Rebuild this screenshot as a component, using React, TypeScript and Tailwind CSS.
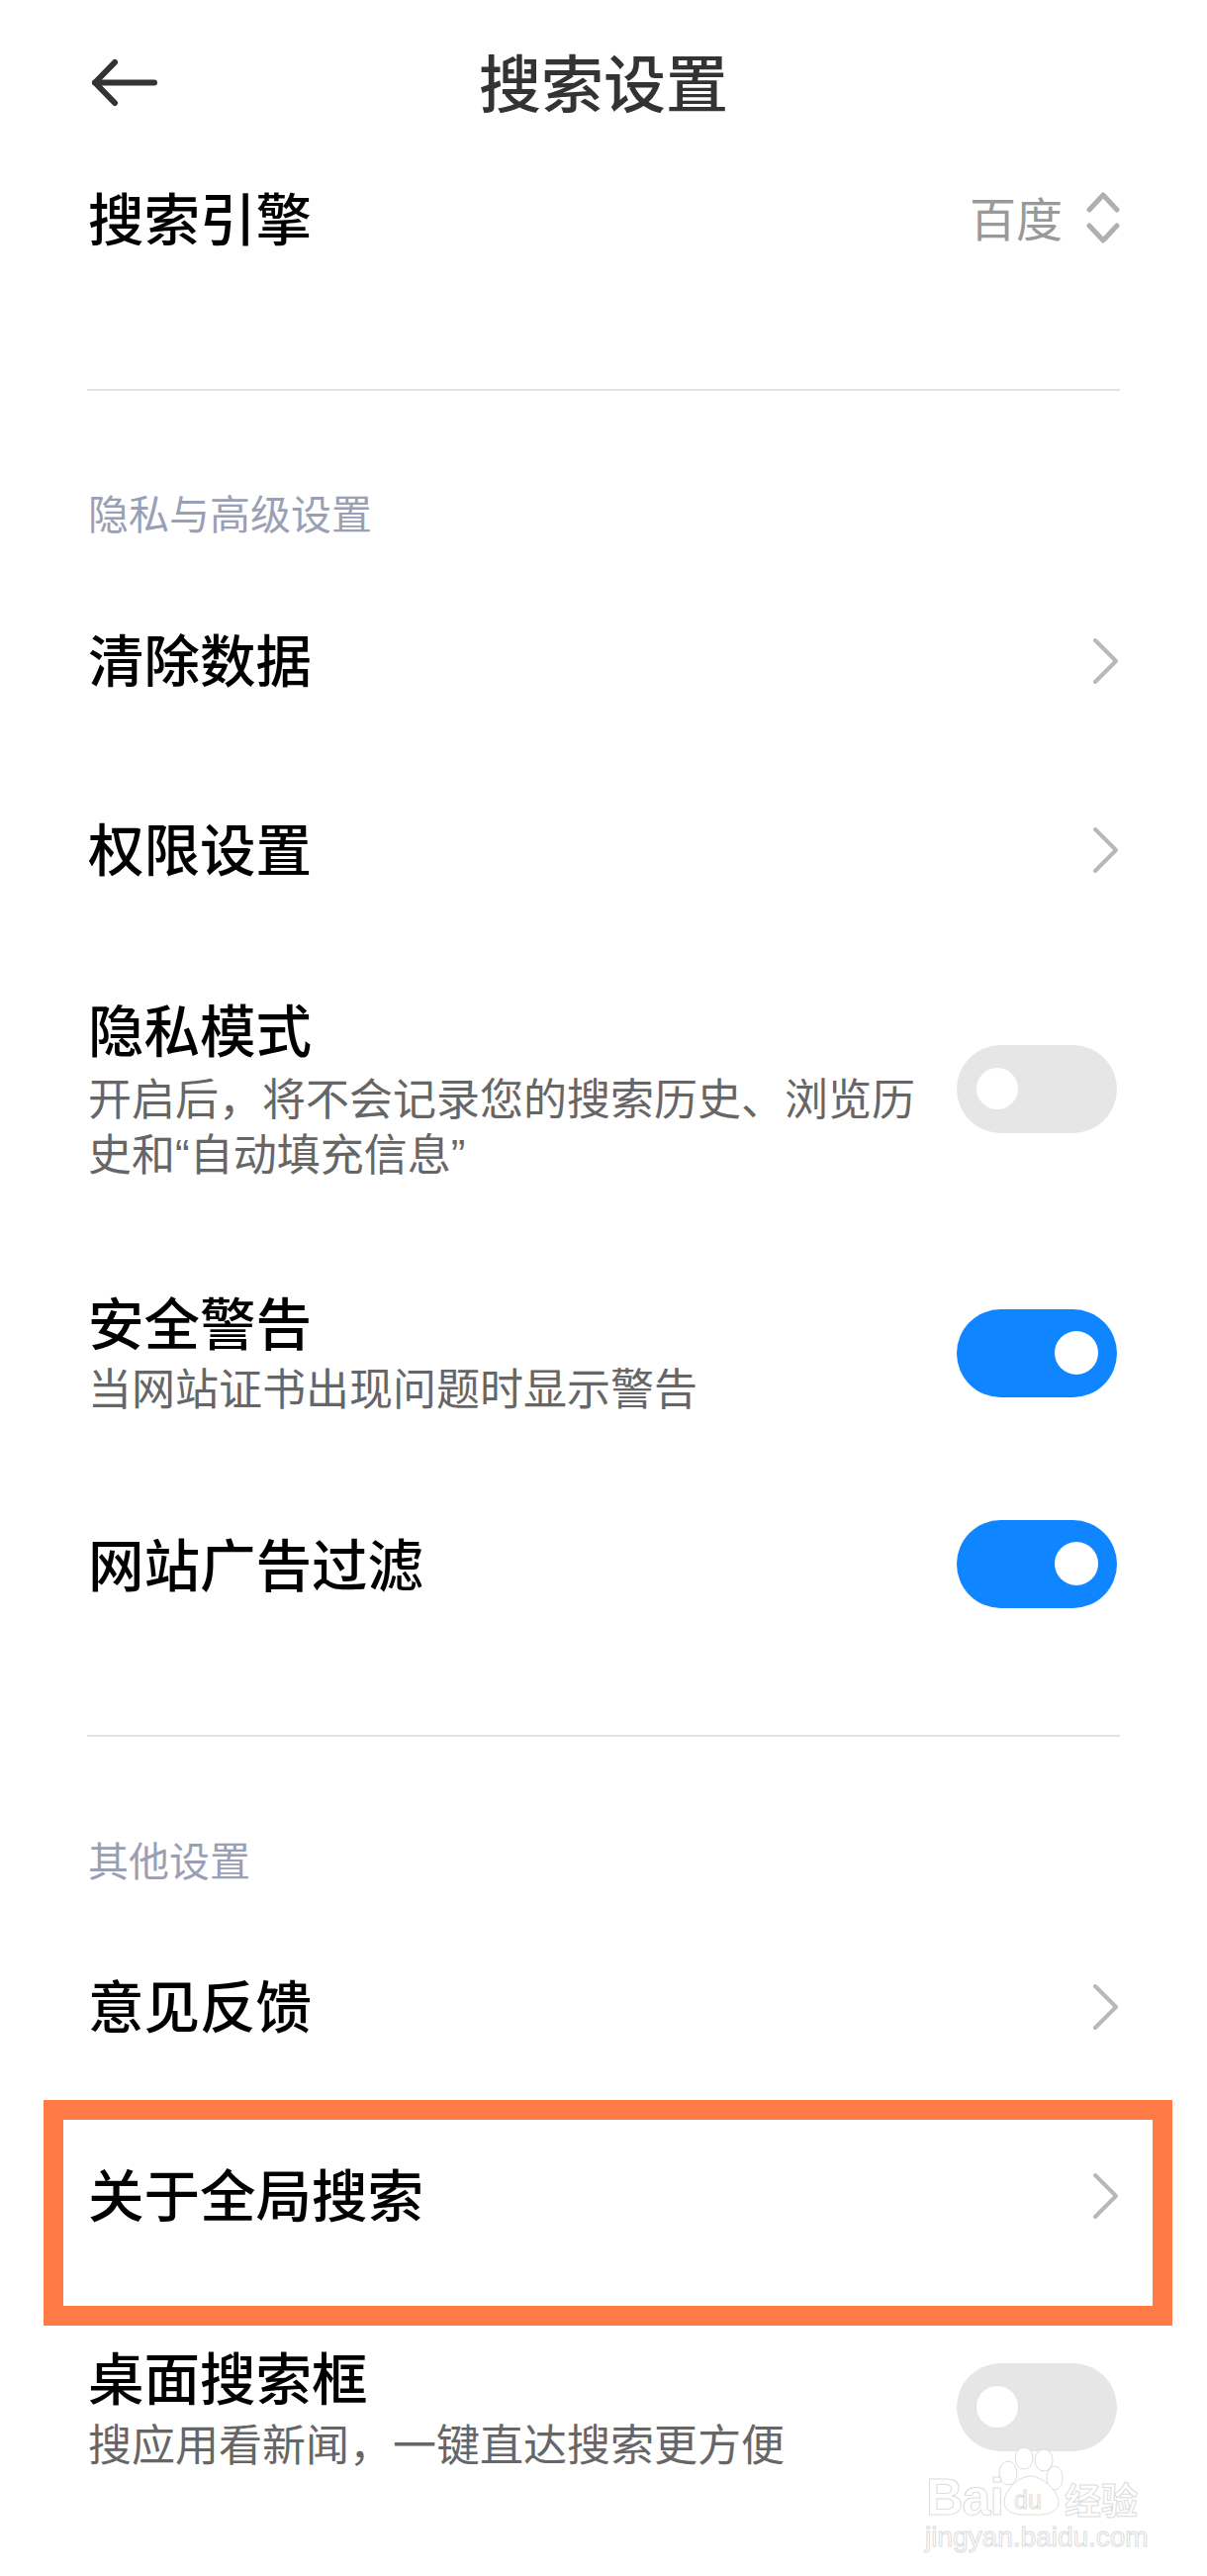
import React from "react";

const Chevron = () => (
  <svg width="27" height="48" viewBox="0 0 27 48" fill="none" stroke="#b8b8b8" strokeWidth="4" strokeLinecap="round" strokeLinejoin="round">
    <path d="M3 3 L24 24 L3 45" />
  </svg>
);

const Toggle = ({ on }: { on?: boolean }) => (
  <div className={on ? "flex h-[89px] w-[162px] shrink-0 items-center justify-end rounded-full bg-[#0f85ff] pr-[19px]" : "flex h-[89px] w-[162px] shrink-0 items-center rounded-full bg-[#e6e6e6] pl-[20px]"}>
    <div className={on ? "h-[44px] w-[44px] rounded-full bg-white" : "h-[42px] w-[42px] rounded-full bg-white"} />
  </div>
);

const LinkRow = ({ title }: { title: string }) => (
  <div className="flex h-[191px] items-center justify-between pl-[89px] pr-[89px]">
    <div className="pb-[8px] text-[56.5px] leading-[66px] font-medium text-black">{title}</div>
    <Chevron />
  </div>
);

const SectionTitle = ({ title }: { title: string }) => (
  <div className="pl-[89px] text-[41px] leading-[60px] text-[#9a9fb5]">{title}</div>
);

const Divider = () => <div className="mx-[88px] h-[2px] bg-[#e5e5e5]" />;

const Watermark = () => (
  <svg className="absolute left-[920px] top-[2460px]" width="260" height="125" viewBox="0 40 260 125" fill="#fff" stroke="#dcdcdc" strokeWidth="1">
    <ellipse cx="115" cy="64" rx="9" ry="11" />
    <ellipse cx="135" cy="66" rx="9" ry="11" />
    <ellipse cx="99" cy="79" rx="9" ry="12" />
    <ellipse cx="146" cy="84" rx="8" ry="12" />
    <path d="M122 82 C138 84 150 100 150 108 C150 118 140 122 122 121 C105 122 95 118 95 108 C95 98 108 82 122 82 Z" />
    <text x="16" y="121" fontFamily="Liberation Sans, sans-serif" fontWeight="700" fontSize="52" letterSpacing="-1">Bai</text>
    <text x="105" y="115" fontFamily="Liberation Sans, sans-serif" fontSize="25">du</text>
    <text x="156" y="121" fontFamily="'Noto Sans CJK SC', sans-serif" fontWeight="700" fontSize="37">经验</text>
    <text x="15" y="153" fontFamily="Liberation Sans, sans-serif" fontSize="28">jingyan.baidu.com</text>
  </svg>
);

export default function App() {
  return (
    <div className="relative h-[2603px] w-[1220px] overflow-hidden bg-white font-['Noto_Sans_CJK_SC',sans-serif]">
      <header className="relative flex h-[164px] items-center justify-center">
        <svg className="absolute left-[91px] top-[59px]" width="70" height="49" viewBox="0 0 70 49" fill="none" stroke="#333" strokeWidth="6" strokeLinecap="round" strokeLinejoin="round">
          <path d="M25 4 L5 24.5 L25 45" />
          <path d="M5 24.5 H65" />
        </svg>
        <h1 className="pb-[3px] text-[63px] leading-[72px] font-medium text-[#333]">搜索设置</h1>
      </header>

      <div className="flex h-[114px] items-center justify-between pl-[89px] pr-[88px]">
        <div className="pb-[6px] text-[56.5px] leading-[66px] font-medium text-black">搜索引擎</div>
        <div className="flex items-center gap-[24px] pb-[2px]">
          <span className="pb-[2px] text-[47px] leading-[56px] text-[#999]">百度</span>
          <svg width="34" height="52" viewBox="0 0 34 52" fill="none" stroke="#b0b0b0" strokeWidth="5" strokeLinecap="round" strokeLinejoin="round">
            <path d="M3 18 L17 3 L31 18" />
            <path d="M3 34 L17 49 L31 34" />
          </svg>
        </div>
      </div>

      <div className="h-[115px]" />
      <Divider />
      <div className="h-[92px]" />
      <SectionTitle title="隐私与高级设置" />
      <div className="h-[25px]" />

      <LinkRow title="清除数据" />
      <LinkRow title="权限设置" />

      <div className="flex h-[292px] items-center justify-between pl-[89px] pr-[91px]">
        <div className="w-[840px] pb-[1px]">
          <div className="translate-y-[2px] text-[56.5px] leading-[66px] font-medium text-black">隐私模式</div>
          <div className="mt-[11px] text-[44px] leading-[56px] text-[#666]">
            开启后&#xFF0C;将不会记录您的搜索历史、浏览历史和<span className="font-['Liberation_Sans']">“</span>自动填充信息<span className="font-['Liberation_Sans']">”</span>
          </div>
        </div>
        <Toggle />
      </div>

      <div className="flex h-[242px] items-center justify-between pl-[89px] pr-[91px]">
        <div className="pb-[4px]">
          <div className="mb-[3px] text-[56.5px] leading-[66px] font-medium text-black">安全警告</div>
          <div className="mt-[6px] text-[44px] leading-[56px] text-[#666]">当网站证书出现问题时显示警告</div>
        </div>
        <Toggle on />
      </div>

      <div className="flex h-[184px] items-center justify-between pl-[89px] pr-[91px]">
        <div className="pb-[5px] text-[56.5px] leading-[66px] font-medium text-black">网站广告过滤</div>
        <Toggle on />
      </div>

      <div className="h-[81px]" />
      <Divider />
      <div className="h-[93px]" />
      <SectionTitle title="其他设置" />
      <div className="h-[24px]" />

      <LinkRow title="意见反馈" />
      <LinkRow title="关于全局搜索" />

      <div className="flex h-[236px] items-center justify-between pl-[89px] pr-[91px]">
        <div className="pb-[2px]">
          <div className="text-[56.5px] leading-[66px] font-medium text-black">桌面搜索框</div>
          <div className="mt-[7px] text-[44px] leading-[56px] text-[#666]">搜应用看新闻&#xFF0C;一键直达搜索更方便</div>
        </div>
        <Toggle />
      </div>

      <div className="absolute left-[44px] top-[2122px] h-[228px] w-[1141px] border-[20px] border-[#ff7a45]" />
      <Watermark />
    </div>
  );
}
